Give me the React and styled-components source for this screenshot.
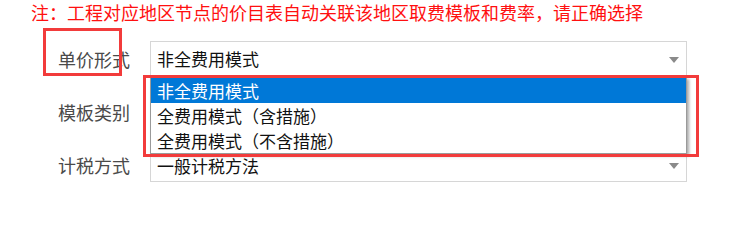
import styled, { createGlobalStyle } from "styled-components"

const GlobalStyle = createGlobalStyle`
    body {
        margin: 0;
        background: #fff;
        font-family: "Noto Sans CJK SC", "Noto Sans", sans-serif;
    }
`

const Page = styled.div`
    position: relative;
    width: 737px;
    height: 205px;
    overflow: hidden;
`

const Note = styled.div`
    padding-left: 31px;
    height: 24px;
    line-height: 24px;
    font-size: 18px;
    color: #ff1010;
    white-space: nowrap;
`

const Form = styled.div`
    display: grid;
    grid-template-columns: 92px 537px;
    row-gap: 18px;
    margin-top: 17px;
    padding-left: 58px;
`

const Label = styled.div`
    display: flex;
    align-items: center;
    height: 35px;
    font-size: 18px;
    color: #4a4a4a;
`

const Field = styled.div`
    position: relative;
    box-sizing: border-box;
    height: 35px;
    display: flex;
    align-items: center;
    justify-content: space-between;
    padding: 0 7px 0 6px;
    border: 1px solid #d6d6d6;
    font-size: 17px;
    color: #111;
`

const Value = styled.span`
    margin-top: ${({ $low }) => $low ? "2px" : "0"};
`

const Arrow = styled.span`
    width: 0;
    height: 0;
    margin-left: auto;
    margin-top: 3px;
    border-top: 6px solid #8a8a8a;
    border-left: 5.5px solid transparent;
    border-right: 5.5px solid transparent;
`

const List = styled.ul`
    position: absolute;
    top: 35px;
    left: -1px;
    z-index: 2;
    box-sizing: border-box;
    width: 537px;
    margin: 0;
    padding: 0;
    list-style: none;
    background: #fff;
    border: 1px solid #9a9a9a;
    box-shadow: 2px 2px 3px rgba(0, 0, 0, 0.35);
`

const Option = styled.li`
    height: 25px;
    line-height: 25px;
    padding-left: 6px;
    font-size: 17px;
    color: ${({ $active }) => $active ? "#fff" : "#111"};
    background: ${({ $active }) => $active ? "#0078d7" : "transparent"};
`

const Mark = styled.div`
    position: absolute;
    z-index: 3;
    box-sizing: border-box;
    top: ${({ $top }) => $top}px;
    left: ${({ $left }) => $left}px;
    width: ${({ $width }) => $width}px;
    height: ${({ $height }) => $height}px;
    border: 3px solid #f23b3b;
`

const options = ["非全费用模式", "全费用模式（含措施）", "全费用模式（不含措施）"]

const App = () => {
    return (
        <Page>
            <GlobalStyle />
            <Note>注：工程对应地区节点的价目表自动关联该地区取费模板和费率，请正确选择</Note>
            <Form>
                <Label>单价形式</Label>
                <Field>
                    <Value>非全费用模式</Value>
                    <Arrow />
                    <List>
                        {options.map((o, i) => (
                            <Option key={o} $active={i === 0}>{o}</Option>
                        ))}
                    </List>
                </Field>
                <Label>模板类别</Label>
                <Field>
                    <Arrow />
                </Field>
                <Label>计税方式</Label>
                <Field>
                    <Value $low>一般计税方法</Value>
                    <Arrow />
                </Field>
            </Form>
            <Mark $top={28} $left={43} $width={79} $height={48} />
            <Mark $top={75} $left={143} $width={556} $height={82} />
        </Page>
    )
}

export default App
